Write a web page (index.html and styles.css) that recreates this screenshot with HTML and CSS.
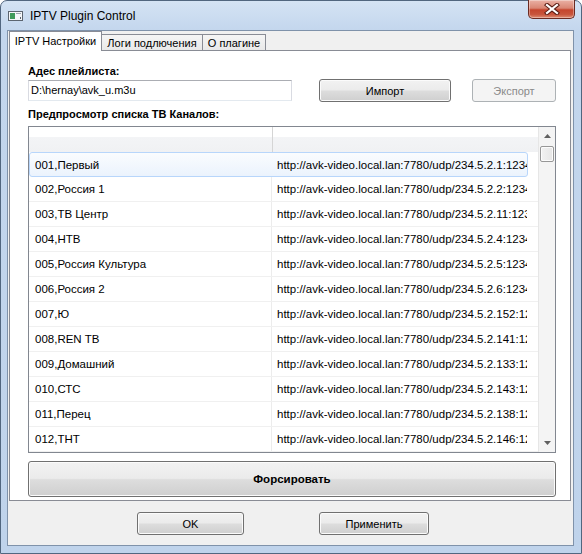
FILE: index.html
```html
<!DOCTYPE html>
<html lang="ru">
<head>
<meta charset="utf-8">
<title>IPTV Plugin Control</title>
<link rel="stylesheet" href="styles.css">
</head>
<body>
<div class="win">
  <div class="titlebar">
    <div class="title">
      <svg class="appicon" width="15" height="10" viewBox="0 0 15 10">
        <rect x="0.5" y="0.5" width="14" height="9" fill="#f4f6f8" stroke="#5c6570"/>
        <rect x="2" y="2" width="5" height="6" fill="#3f9a5a"/>
        <rect x="8" y="2" width="5" height="1" fill="#9aa3ad"/>
        <rect x="12" y="6" width="1" height="2" fill="#5c6570"/>
      </svg>
      <span>IPTV Plugin Control</span>
    </div>
    <div class="close">
      <svg width="16" height="12" viewBox="0 0 16 12">
        <path d="M3 2 L13 10 M13 2 L3 10" stroke="#5b1d14" stroke-width="4.2" stroke-linecap="square"/>
        <path d="M3 2 L13 10 M13 2 L3 10" stroke="#ffffff" stroke-width="2.2" stroke-linecap="square"/>
      </svg>
    </div>
  </div>

  <div class="client">
    <div class="tabs">
      <div class="tab active">IPTV Настройки</div>
      <div class="tab logs">Логи подлючения</div>
      <div class="tab about">О плагине</div>
    </div>

    <div class="pane">
      <div class="lbl">Адес плейлиста:</div>
      <div class="pathrow">
        <div class="input">D:\hernay\avk_u.m3u</div>
        <button class="btn imp">Импорт</button>
        <button class="btn exp" disabled>Экспорт</button>
      </div>
      <div class="lbl second">Предпросмотр списка ТВ Каналов:</div>

      <div class="view">
        <div class="grid">
          <div class="thead">
            <div class="th c1"></div>
            <div class="th c2"></div>
          </div>
          <div class="row hot"><div class="c1">001,Первый</div><div class="c2">http://avk-video.local.lan:7780/udp/234.5.2.1:1234</div></div>
          <div class="row"><div class="c1">002,Россия 1</div><div class="c2">http://avk-video.local.lan:7780/udp/234.5.2.2:1234</div></div>
          <div class="row"><div class="c1">003,ТВ Центр</div><div class="c2">http://avk-video.local.lan:7780/udp/234.5.2.11:1234</div></div>
          <div class="row"><div class="c1">004,НТВ</div><div class="c2">http://avk-video.local.lan:7780/udp/234.5.2.4:1234</div></div>
          <div class="row"><div class="c1">005,Россия Культура</div><div class="c2">http://avk-video.local.lan:7780/udp/234.5.2.5:1234</div></div>
          <div class="row"><div class="c1">006,Россия 2</div><div class="c2">http://avk-video.local.lan:7780/udp/234.5.2.6:1234</div></div>
          <div class="row"><div class="c1">007,Ю</div><div class="c2">http://avk-video.local.lan:7780/udp/234.5.2.152:1234</div></div>
          <div class="row"><div class="c1">008,REN TB</div><div class="c2">http://avk-video.local.lan:7780/udp/234.5.2.141:1234</div></div>
          <div class="row"><div class="c1">009,Домашний</div><div class="c2">http://avk-video.local.lan:7780/udp/234.5.2.133:1234</div></div>
          <div class="row"><div class="c1">010,СТС</div><div class="c2">http://avk-video.local.lan:7780/udp/234.5.2.143:1234</div></div>
          <div class="row"><div class="c1">011,Перец</div><div class="c2">http://avk-video.local.lan:7780/udp/234.5.2.138:1234</div></div>
          <div class="row"><div class="c1">012,ТНТ</div><div class="c2">http://avk-video.local.lan:7780/udp/234.5.2.146:1234</div></div>
        </div>
        <div class="vscroll">
          <div class="arrow">
            <svg width="7" height="4" viewBox="0 0 7 4"><path d="M0 4 L3.5 0 L7 4 Z" fill="#606060"/></svg>
          </div>
          <div class="track"><div class="thumb"></div></div>
          <div class="arrow">
            <svg width="7" height="4" viewBox="0 0 7 4"><path d="M0 0 L3.5 4 L7 0 Z" fill="#606060"/></svg>
          </div>
        </div>
      </div>

      <button class="btn force">Форсировать</button>
    </div>

    <div class="footer">
      <button class="btn ok">OK</button>
      <button class="btn apply">Применить</button>
    </div>
  </div>
</div>
</body>
</html>
```
FILE: styles.css
```css
body {
  margin: 0;
  width: 582px;
  height: 554px;
  overflow: hidden;
  font-family: "Liberation Sans", Arial, sans-serif;
  font-size: 11px;
  color: #000;
  background: #fff;
}

/* window frame */
.win {
  box-sizing: border-box;
  width: 582px;
  height: 554px;
  border: 1px solid #51667f;
  border-radius: 7px 7px 0 0;
  background: linear-gradient(180deg, #d4e3f4 0px, #c3d6ed 30px, #bfd3eb 100%);
  padding: 0 7px 7px 6px;
  display: flex;
  flex-direction: column;
}

.titlebar {
  height: 29px;
  flex: none;
  display: flex;
  align-items: center;
  justify-content: space-between;
  padding-left: 1px;
}

.title {
  display: flex;
  align-items: center;
  font-size: 12px;
  color: #000;
}

.appicon {
  margin-right: 7px;
  margin-top: 1px;
}

.close {
  align-self: flex-start;
  margin-top: -1px;
  margin-right: -1px;
  width: 47px;
  height: 19px;
  box-sizing: border-box;
  border: 1px solid #6b2b22;
  border-top: none;
  border-radius: 0 0 5px 5px;
  background: linear-gradient(180deg, #eab1a5 0%, #d98674 45%, #c5452d 55%, #c8553c 80%, #dd8c72 100%);
  display: flex;
  align-items: center;
  justify-content: center;
  box-shadow: inset 0 0 0 1px rgba(255, 255, 255, 0.35);
}

/* client area */
.client {
  flex: 1;
  display: flex;
  flex-direction: column;
  background: #f0f0f0;
  border: 1px solid #7f92aa;
}

.tabs {
  height: 19px;
  flex: none;
  display: flex;
  align-items: flex-end;
  padding-left: 1px;
}

.tab {
  box-sizing: border-box;
  height: 16px;
  border: 1px solid #898c95;
  border-bottom: none;
  background: linear-gradient(180deg, #f5f5f5, #e9e9e9);
  display: flex;
  align-items: center;
  justify-content: center;
  white-space: nowrap;
  font-size: 11px;
}

.tab.active {
  height: 20px;
  width: 93px;
  margin-bottom: -1px;
  background: #fff;
  position: relative;
  z-index: 1;
  padding-bottom: 1px;
}

.tab.logs {
  width: 102px;
  margin-left: -1px;
  padding-top: 1px;
}

.tab.about {
  width: 64px;
  margin-left: -1px;
  padding-top: 1px;
}

.pane {
  box-sizing: border-box;
  height: 451px;
  flex: none;
  margin: 0 2px 0 1px;
  border: 1px solid #898c95;
  background: #fff;
  padding: 13px 14px 0 18px;
  display: flex;
  flex-direction: column;
}

.lbl {
  font-weight: bold;
  font-size: 11px;
  line-height: 14px;
  height: 14px;
  white-space: nowrap;
}

.lbl.second {
  margin-top: 5px;
}

.pathrow {
  margin-top: 1px;
  height: 23px;
  display: flex;
  align-items: center;
}

.input {
  box-sizing: border-box;
  width: 264px;
  height: 21px;
  border: 1px solid #d9dbe2;
  border-top-color: #abadb3;
  border-bottom-color: #e3e9ef;
  padding-left: 2px;
  line-height: 19px;
  white-space: nowrap;
  background: #fff;
}

/* push buttons */
.btn {
  box-sizing: border-box;
  font-family: "Liberation Sans", Arial, sans-serif;
  font-size: 11px;
  color: #000;
  border: 1px solid #707070;
  border-radius: 3px;
  background: linear-gradient(180deg, #f2f2f2 0%, #ebebeb 48%, #dddddd 52%, #cfcfcf 100%);
  box-shadow: inset 0 0 0 1px #fbfbfb;
  padding: 0;
  margin: 0;
}

.imp {
  width: 132px;
  height: 23px;
  margin-left: 27px;
}

.exp {
  width: 84px;
  height: 23px;
  margin-left: 21px;
  color: #8a8a8a;
  border-color: #adb2b5;
  background: #f4f4f4;
  box-shadow: none;
}

/* channel list view */
.view {
  box-sizing: border-box;
  margin-top: 5px;
  height: 327px;
  border: 1px solid #828790;
  display: flex;
  overflow: hidden;
}

.grid {
  flex: 1;
  display: flex;
  flex-direction: column;
  overflow: hidden;
}

.thead {
  height: 25px;
  flex: none;
  display: flex;
  background: linear-gradient(180deg, #ffffff 0%, #ffffff 40%, #f3f4f6 42%, #f0f1f3 100%);
}

.th.c1 {
  width: 243px;
  border-right: 1px solid #d5d5d5;
}

.row {
  box-sizing: border-box;
  height: 25px;
  flex: none;
  display: flex;
  align-items: center;
  border-bottom: 1px solid #f0f0f0;
  font-size: 11.5px;
  white-space: nowrap;
}

.row .c1 {
  box-sizing: border-box;
  width: 243px;
  height: 100%;
  display: flex;
  align-items: center;
  padding-left: 6px;
  border-right: 1px solid #ececec;
  overflow: hidden;
}

.row .c2 {
  box-sizing: border-box;
  width: 255px;
  height: 100%;
  display: flex;
  align-items: center;
  padding-left: 5px;
  overflow: hidden;
}

.row.hot {
  width: 499px;
  border: 1px solid #b8d6fb;
  border-radius: 3px;
  background: linear-gradient(180deg, #fafcfe 0%, #ebf3fd 100%);
}

.row.hot .c1 {
  width: 242px;
  padding-left: 5px;
  border-right-color: transparent;
}

.row.hot .c2 {
  width: 255px;
}

.vscroll {
  width: 17px;
  flex: none;
  display: flex;
  flex-direction: column;
  background: #f4f4f4;
  border-left: 1px solid #e6e6e6;
  box-sizing: border-box;
}

.arrow {
  height: 18px;
  flex: none;
  display: flex;
  align-items: center;
  justify-content: center;
}

.track {
  flex: 1;
  padding: 1px 1px 0 1px;
}

.thumb {
  box-sizing: border-box;
  height: 16px;
  border: 1px solid #979797;
  border-radius: 2px;
  background: linear-gradient(90deg, #f2f2f2, #e6e6e6);
  box-shadow: inset 0 0 0 1px #fcfcfc;
}

.force {
  margin-top: 8px;
  height: 36px;
  width: 528px;
  font-weight: bold;
  font-size: 11.5px;
}

.footer {
  flex: 1;
  display: flex;
  align-items: flex-start;
  padding: 11px 0 0 129px;
  gap: 75px;
}

.ok {
  width: 107px;
  height: 23px;
}

.apply {
  width: 110px;
  height: 23px;
}
```
